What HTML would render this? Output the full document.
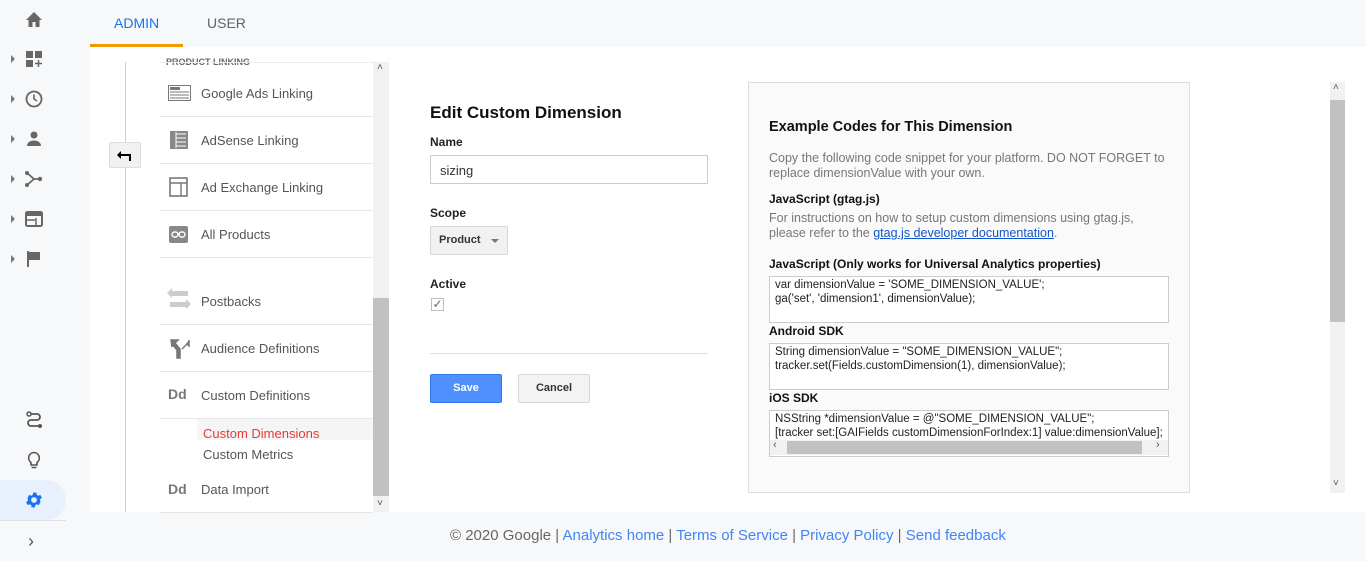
<!DOCTYPE html>
<html><head><meta charset="utf-8"><style>
*{box-sizing:border-box;margin:0;padding:0}
body{width:1366px;height:561px;overflow:hidden;background:#f7f8fa;font-family:"Liberation Sans",Arial,sans-serif;position:relative;color:#333}
.abs{position:absolute}
.nav{left:0;top:0;width:66px;height:561px}
.ni{position:absolute;left:24px;width:20px;height:20px}
.tri{position:absolute;left:11px;width:0;height:0;border-left:4px solid #777;border-top:4px solid transparent;border-bottom:4px solid transparent}
.main{left:90px;top:47px;width:1276px;height:465px;background:#fff}
.row{position:absolute;left:160px;width:213px;height:47px;border-bottom:1px solid #e6e6e6;font-size:13px;color:#555}
.row span{position:absolute;left:41px;top:16px}
.row i{position:absolute;left:8px;top:14px;font-style:normal;font-weight:bold;color:#777;font-size:14px}
.lbl{font-size:12px;font-weight:bold;color:#222}
.code{position:absolute;left:769px;width:400px;height:47px;border:1px solid #ccc;background:#fff;font-size:11.5px;line-height:14px;padding:1px 5px;color:#222;white-space:nowrap;overflow:hidden}
.h{position:absolute;left:769px;font-size:12px;font-weight:bold;color:#111}
.gray{color:#777;font-size:12.5px;line-height:15px}
</style></head><body>
<div class="abs nav">
<svg class="ni" style="top:10px" viewBox="0 0 20 20"><path d="M10 2 L2 10 H4.5 V17 H8.5 V12 H11.5 V17 H15.5 V10 H18Z" fill="#666"/></svg>
<div class="tri" style="top:55px"></div><svg class="ni" style="top:49px" viewBox="0 0 20 20"><rect x="2" y="2" width="7" height="7" fill="#666"/><rect x="11" y="2" width="7" height="7" fill="#666"/><rect x="2" y="11" width="7" height="7" fill="#666"/><path d="M14.5 11v7M11 14.5h7" stroke="#666" stroke-width="1.5"/></svg>
<div class="tri" style="top:95px"></div><svg class="ni" style="top:89px" viewBox="0 0 20 20"><circle cx="10" cy="10" r="7.5" fill="none" stroke="#666" stroke-width="1.8"/><path d="M10 5.5V10l3 2" fill="none" stroke="#666" stroke-width="1.6"/></svg>
<div class="tri" style="top:135px"></div><svg class="ni" style="top:129px" viewBox="0 0 20 20"><circle cx="10" cy="6" r="3.5" fill="#666"/><path d="M3 17c0-4 4-5.5 7-5.5s7 1.5 7 5.5z" fill="#666"/></svg>
<div class="tri" style="top:175px"></div><svg class="ni" style="top:169px" viewBox="0 0 20 20"><path d="M3 4l7 6-7 6M10 10h7" fill="none" stroke="#666" stroke-width="1.8"/><circle cx="3" cy="4" r="2" fill="#666"/><circle cx="3" cy="16" r="2" fill="#666"/><circle cx="16" cy="10" r="2.2" fill="#666"/></svg>
<div class="tri" style="top:215px"></div><svg class="ni" style="top:209px" viewBox="0 0 20 20"><rect x="2" y="3" width="16" height="14" rx="1.5" fill="none" stroke="#666" stroke-width="2"/><rect x="2" y="3" width="16" height="4" fill="#666"/><path d="M3 11h8M12 9v7" stroke="#666" stroke-width="1.5"/></svg>
<div class="tri" style="top:255px"></div><svg class="ni" style="top:249px" viewBox="0 0 20 20"><path d="M4 2v16" stroke="#666" stroke-width="2"/><path d="M5 3h11v8H5z" fill="#666"/></svg>
<svg class="ni" style="top:410px" viewBox="0 0 20 20"><circle cx="5" cy="4" r="2" fill="none" stroke="#555" stroke-width="1.5"/><path d="M7 4h6a3 3 0 010 6H7a3 3 0 000 6h8" fill="none" stroke="#555" stroke-width="1.8"/><circle cx="16" cy="16" r="2" fill="#555"/></svg>
<svg class="ni" style="top:450px" viewBox="0 0 20 20"><path d="M10 2.5a5.5 5.5 0 00-3 10V15h6v-2.5a5.5 5.5 0 00-3-10z" fill="none" stroke="#555" stroke-width="1.6"/><path d="M7.5 17.5h5" stroke="#555" stroke-width="1.5"/></svg>
</div>
<div class="abs" style="left:0;top:480px;width:66px;height:40px;background:#e8f0fe;border-radius:0 20px 20px 0"></div>
<svg class="abs" style="left:24px;top:490px;width:20px;height:20px" viewBox="0 0 24 24"><path fill="#1a73e8" d="M19.4 13a7.5 7.5 0 000-2l2.1-1.6-2-3.5-2.5 1a7.3 7.3 0 00-1.7-1l-.4-2.7h-4l-.4 2.7c-.6.3-1.2.6-1.7 1l-2.5-1-2 3.5L4.6 11a7.5 7.5 0 000 2l-2.1 1.6 2 3.5 2.5-1c.5.4 1.1.7 1.7 1l.4 2.7h4l.4-2.7c.6-.3 1.2-.6 1.7-1l2.5 1 2-3.5zM12 15.5a3.5 3.5 0 110-7 3.5 3.5 0 010 7z"/></svg>
<div class="abs" style="left:0;top:520px;width:66px;height:1px;background:#e0e0e0"></div>
<div class="abs" style="left:28px;top:531px;font-size:18px;color:#555">›</div>

<div class="abs" style="left:114px;top:15px;font-size:14px;color:#1a73e8">ADMIN</div>
<div class="abs" style="left:207px;top:15px;font-size:14px;color:#5f6368">USER</div>
<div class="abs" style="left:90px;top:44px;width:93px;height:3px;background:#f29900"></div>

<div class="abs main"></div>
<div class="abs" style="left:125px;top:62px;width:1px;height:450px;background:#ccc"></div>
<div class="abs" style="left:109px;top:142px;width:32px;height:26px;background:#f1f1f1;border:1px solid #ddd;border-radius:2px"></div>
<svg class="abs" style="left:116px;top:148px;width:18px;height:14px" viewBox="0 0 18 14"><path d="M5 3L1 7l4 4z" fill="#000"/><path d="M4 7h10V13" fill="none" stroke="#000" stroke-width="2"/></svg>
<div class="abs" style="left:166px;top:58px;font-size:9px;font-weight:bold;color:#666;height:10px;overflow:hidden;line-height:9px">PRODUCT LINKING</div>
<div class="abs" style="left:160px;top:62px;width:213px;height:1px;background:#eee"></div>
<div class="row" style="top:70px"><svg class="abs" style="left:8px;top:15px;width:23px;height:16px" viewBox="0 0 23 16"><rect x=".5" y=".5" width="22" height="15" fill="none" stroke="#777"/><rect x="2" y="2" width="10" height="3" fill="#777"/><path d="M2 7h19M2 10h19M2 13h19" stroke="#777"/></svg><span style="top:16px">Google Ads Linking</span></div>
<div class="row" style="top:117px"><svg class="abs" style="left:10px;top:14px;width:18px;height:18px" viewBox="0 0 18 18"><rect width="18" height="18" fill="#888"/><path d="M6 3h10M6 7h10M6 11h10M6 15h10M6 1v16" stroke="#fff" stroke-width="1"/></svg><span>AdSense Linking</span></div>
<div class="row" style="top:164px"><svg class="abs" style="left:9px;top:13px;width:19px;height:20px" viewBox="0 0 19 20"><rect x="1" y="1" width="17" height="18" fill="none" stroke="#777" stroke-width="1.6"/><path d="M1 6h17M12 6v13" stroke="#777" stroke-width="1.4"/></svg><span>Ad Exchange Linking</span></div>
<div class="row" style="top:211px"><svg class="abs" style="left:9px;top:15px;width:19px;height:17px" viewBox="0 0 19 17"><rect width="19" height="17" rx="2" fill="#888"/><rect x="3" y="6" width="6" height="5" rx="2.5" fill="none" stroke="#fff" stroke-width="1.4"/><rect x="10" y="6" width="6" height="5" rx="2.5" fill="none" stroke="#fff" stroke-width="1.4"/></svg><span>All Products</span></div>
<div class="row" style="top:278px;height:47px"><svg class="abs" style="left:6px;top:10px;width:26px;height:24px" viewBox="0 0 26 24"><path d="M6 3h16v5H6zM6 0L1 5l5 5zM4 14h16v5H4zM20 11l5 5-5 5z" fill="#ccc"/></svg><span style="top:16px">Postbacks</span></div>
<div class="row" style="top:325px"><svg class="abs" style="left:10px;top:14px;width:20px;height:20px" viewBox="0 0 20 20"><path d="M1 1h7L5 4l5 6v9H7v-8L2 5l0 3zM19 1v6l-2-2-5 5" fill="#777" stroke="#777" stroke-width="1.5"/></svg><span>Audience Definitions</span></div>
<div class="row" style="top:372px"><i>Dd</i><span>Custom Definitions</span></div>
<div class="abs" style="left:197px;top:419px;width:176px;height:21px;background:#f5f5f5"></div>
<div class="abs" style="left:203px;top:426px;font-size:13px;color:#e53935">Custom Dimensions</div>
<div class="abs" style="left:203px;top:447px;font-size:13px;color:#555">Custom Metrics</div>
<div class="row" style="top:466px"><i style="top:15px">Dd</i><span>Data Import</span></div>
<div class="abs" style="left:373px;top:62px;width:16px;height:450px;background:#f1f1f1"></div>
<div class="abs" style="left:373px;top:298px;width:16px;height:198px;background:#c1c1c1"></div>
<div class="abs" style="left:377px;top:62px;font-size:10px;color:#555">˄</div>
<div class="abs" style="left:377px;top:498px;font-size:10px;color:#555">˅</div>

<div class="abs" style="left:430px;top:103px;font-size:17px;font-weight:bold;color:#111">Edit Custom Dimension</div>
<div class="abs lbl" style="left:430px;top:135px">Name</div>
<div class="abs" style="left:430px;top:155px;width:278px;height:29px;border:1px solid #ccc;font-size:13px;padding:7px 9px;color:#333">sizing</div>
<div class="abs lbl" style="left:430px;top:206px">Scope</div>
<div class="abs" style="left:430px;top:226px;width:78px;height:29px;border:1px solid #d6d6d6;background:#f1f1f1;border-radius:2px;font-size:11px;font-weight:bold;padding:7px 8px;color:#333">Product<span style="position:absolute;left:60px;top:12px;border-top:4px solid #777;border-left:4px solid transparent;border-right:4px solid transparent"></span></div>
<div class="abs lbl" style="left:430px;top:277px">Active</div>
<div class="abs" style="left:431px;top:298px;width:13px;height:13px;border:1px solid #bbb;font-size:12px;line-height:11px;color:#666;text-align:center">✓</div>
<div class="abs" style="left:430px;top:353px;width:278px;height:1px;background:#e0e0e0"></div>
<div class="abs" style="left:430px;top:374px;width:72px;height:29px;background:#4d90fe;border:1px solid #3079ed;border-radius:2px;color:#fff;font-size:11px;font-weight:bold;text-align:center;line-height:27px">Save</div>
<div class="abs" style="left:518px;top:374px;width:72px;height:29px;background:#f3f3f3;border:1px solid #d6d6d6;border-radius:2px;color:#333;font-size:11px;font-weight:bold;text-align:center;line-height:27px">Cancel</div>

<div class="abs" style="left:748px;top:82px;width:442px;height:411px;background:#fafafa;border:1px solid #ddd"></div>
<div class="abs" style="left:769px;top:119px;font-size:14.5px;font-weight:bold;color:#111">Example Codes for This Dimension</div>
<div class="abs gray" style="left:769px;top:151px;width:400px">Copy the following code snippet for your platform. DO NOT FORGET to replace dimensionValue with your own.</div>
<div class="h" style="top:192px">JavaScript (gtag.js)</div>
<div class="abs gray" style="left:769px;top:211px;width:400px">For instructions on how to setup custom dimensions using gtag.js,<br>please refer to the <u style="color:#15c">gtag.js developer documentation</u>.</div>
<div class="h" style="top:257px">JavaScript (Only works for Universal Analytics properties)</div>
<div class="code" style="top:276px">var dimensionValue = 'SOME_DIMENSION_VALUE';<br>ga('set', 'dimension1', dimensionValue);</div>
<div class="h" style="top:324px">Android SDK</div>
<div class="code" style="top:343px">String dimensionValue = "SOME_DIMENSION_VALUE";<br>tracker.set(Fields.customDimension(1), dimensionValue);</div>
<div class="h" style="top:391px">iOS SDK</div>
<div class="code" style="top:410px">NSString *dimensionValue = @"SOME_DIMENSION_VALUE";<br>[tracker set:[GAIFields customDimensionForIndex:1] value:dimensionValue];</div>
<div class="abs" style="left:770px;top:440px;width:398px;height:15px;background:#f1f1f1"></div>
<div class="abs" style="left:787px;top:441px;width:355px;height:13px;background:#c1c1c1"></div>
<div class="abs" style="left:773px;top:439px;font-size:11px;color:#555">‹</div>
<div class="abs" style="left:1156px;top:439px;font-size:11px;color:#555">›</div>

<div class="abs" style="left:1330px;top:82px;width:15px;height:411px;background:#f1f1f1"></div>
<div class="abs" style="left:1330px;top:100px;width:15px;height:222px;background:#c1c1c1"></div>
<div class="abs" style="left:1333px;top:82px;font-size:10px;color:#555">˄</div>
<div class="abs" style="left:1333px;top:478px;font-size:10px;color:#555">˅</div>

<div class="abs" style="left:450px;top:527px;font-size:15px;color:#666;white-space:nowrap">© 2020 Google | <span style="color:#4285f4">Analytics home</span> | <span style="color:#4285f4">Terms of Service</span> | <span style="color:#4285f4">Privacy Policy</span> | <span style="color:#4285f4">Send feedback</span></div>
</body></html>
